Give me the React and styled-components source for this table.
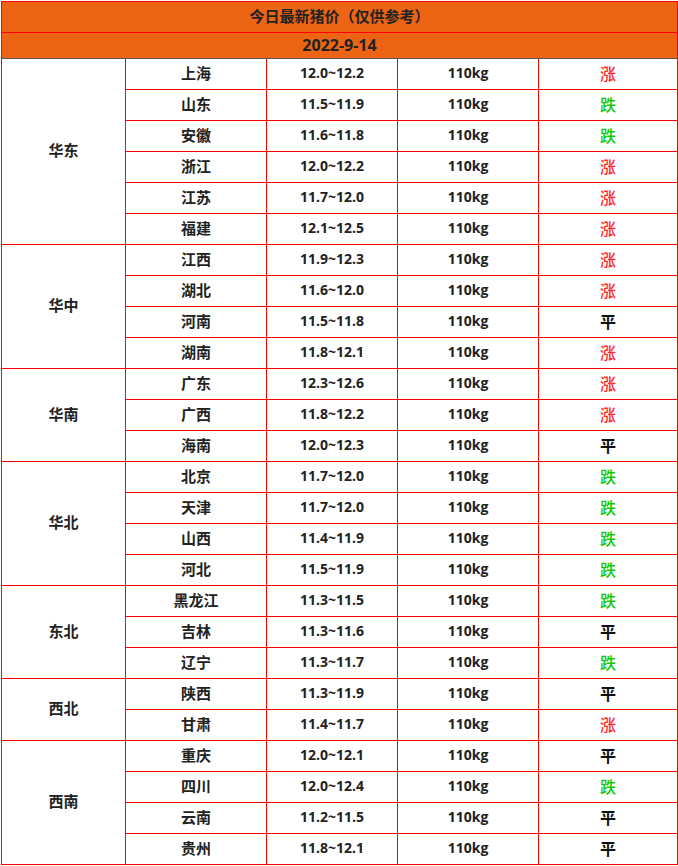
import React from 'react';
import styled, { createGlobalStyle } from 'styled-components';

const GlobalStyle = createGlobalStyle`
  html, body {
    margin: 0;
    padding: 0;
    background: #ffffff;
  }
  body {
    font-family: "Open Sans", "Noto Sans CJK SC", sans-serif;
    color: #222222;
  }
`;

const Page = styled.div`
  padding: 1px 0 0 1px;
`;

const Sheet = styled.div`
  width: 677px;
  box-sizing: border-box;
  border: 1px solid #ff0000;
  font-weight: 700;
  font-size: 14px;
`;

const HeaderRow = styled.div`
  display: flex;
  align-items: center;
  justify-content: center;
  box-sizing: border-box;
  height: ${(p) => p.$height}px;
  padding-bottom: 2px;
  line-height: 1;
  background: #ec6414;
  color: #222222;
  font-size: ${(p) => p.$size}px;
  border-bottom: 1px solid ${(p) => p.$line};
`;

const Body = styled.div`
  display: grid;
  grid-template-columns: 123px 140px 130px 140px 138px;
  grid-auto-rows: 30px;
  gap: 1px;
  background: #ff0000;
`;

const Cell = styled.div`
  display: flex;
  align-items: center;
  justify-content: center;
  box-sizing: border-box;
  padding-bottom: 2px;
  line-height: 1;
  background: #ffffff;
  font-size: ${(p) => (p.$cjk ? '15px' : '14px')};
  white-space: nowrap;
`;

const RegionCell = styled(Cell)`
  grid-row: span ${(p) => p.$span};
`;

const trendColor = {
  涨: '#ff2a2a',
  跌: '#12c800',
  平: '#111111',
};

const TrendCell = styled(Cell)`
  color: ${(p) => trendColor[p.$trend]};
  font-size: 16px;
  font-weight: ${(p) => (p.$trend === '平' ? 700 : 500)};
  font-family: "Noto Sans CJK SC", sans-serif;
`;

const regions = [
  {
    name: '华东',
    rows: [
      ['上海', '12.0~12.2', '涨'],
      ['山东', '11.5~11.9', '跌'],
      ['安徽', '11.6~11.8', '跌'],
      ['浙江', '12.0~12.2', '涨'],
      ['江苏', '11.7~12.0', '涨'],
      ['福建', '12.1~12.5', '涨'],
    ],
  },
  {
    name: '华中',
    rows: [
      ['江西', '11.9~12.3', '涨'],
      ['湖北', '11.6~12.0', '涨'],
      ['河南', '11.5~11.8', '平'],
      ['湖南', '11.8~12.1', '涨'],
    ],
  },
  {
    name: '华南',
    rows: [
      ['广东', '12.3~12.6', '涨'],
      ['广西', '11.8~12.2', '涨'],
      ['海南', '12.0~12.3', '平'],
    ],
  },
  {
    name: '华北',
    rows: [
      ['北京', '11.7~12.0', '跌'],
      ['天津', '11.7~12.0', '跌'],
      ['山西', '11.4~11.9', '跌'],
      ['河北', '11.5~11.9', '跌'],
    ],
  },
  {
    name: '东北',
    rows: [
      ['黑龙江', '11.3~11.5', '跌'],
      ['吉林', '11.3~11.6', '平'],
      ['辽宁', '11.3~11.7', '跌'],
    ],
  },
  {
    name: '西北',
    rows: [
      ['陕西', '11.3~11.9', '平'],
      ['甘肃', '11.4~11.7', '涨'],
    ],
  },
  {
    name: '西南',
    rows: [
      ['重庆', '12.0~12.1', '平'],
      ['四川', '12.0~12.4', '跌'],
      ['云南', '11.2~11.5', '平'],
      ['贵州', '11.8~12.1', '平'],
    ],
  },
];

export default function App() {
  return (
    <Page>
      <GlobalStyle />
      <Sheet>
        <HeaderRow $height={31} $size={15} $line="#ff0000">
          今日最新猪价（仅供参考）
        </HeaderRow>
        <HeaderRow $height={26} $size={16} $line="#555555">
          2022-9-14
        </HeaderRow>
        <Body>
          {regions.map((region) =>
            region.rows.map(([city, price, trend], i) => (
              <React.Fragment key={city}>
                {i === 0 && (
                  <RegionCell $cjk $span={region.rows.length}>
                    {region.name}
                  </RegionCell>
                )}
                <Cell $cjk>{city}</Cell>
                <Cell>{price}</Cell>
                <Cell>110kg</Cell>
                <TrendCell $cjk $trend={trend}>
                  {trend}
                </TrendCell>
              </React.Fragment>
            ))
          )}
        </Body>
      </Sheet>
    </Page>
  );
}
